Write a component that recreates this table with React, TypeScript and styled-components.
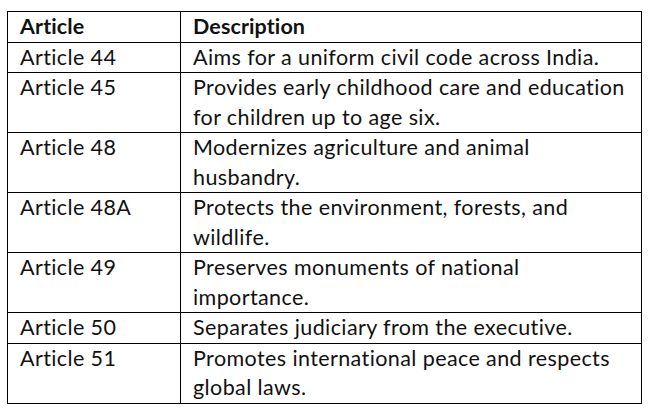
import styled, { createGlobalStyle } from 'styled-components'

const GlobalStyle = createGlobalStyle`
  html, body {
    margin: 0;
    padding: 0;
    background: #ffffff;
  }
  body {
    font-family: Lato, 'Liberation Sans', sans-serif;
    color: #111111;
  }
`

//#region styles
const Page = styled.div`
  width: 650px;
  height: 415px;
  padding: 11px 0 0 7px;
  box-sizing: border-box;
`
const Table = styled.table`
  width: 634px;
  border-collapse: collapse;
  table-layout: fixed;
  font-size: 21.5px;
  line-height: 29.5px;
`
const Col = styled.col<{ $width: number }>`
  width: ${p => p.$width}px;
`
const HeadCell = styled.th`
  border: 1px solid #000;
  padding: 0 0 0 12px;
  text-align: left;
  font-weight: 700;
  vertical-align: top;
  letter-spacing: 0.1px;
`
const Cell = styled.td`
  border: 1px solid #000;
  padding: 0 0 0 12px;
  vertical-align: top;
  white-space: nowrap;
  letter-spacing: 0.4px;
`
//#endregion

interface RowType {
  article: string;
  lines: string[];
}

const rows: RowType[] = [
  { article: 'Article 44', lines: ['Aims for a uniform civil code across India.'] },
  { article: 'Article 45', lines: ['Provides early childhood care and education', 'for children up to age six.'] },
  { article: 'Article 48', lines: ['Modernizes agriculture and animal', 'husbandry.'] },
  { article: 'Article 48A', lines: ['Protects the environment, forests, and', 'wildlife.'] },
  { article: 'Article 49', lines: ['Preserves monuments of national', 'importance.'] },
  { article: 'Article 50', lines: ['Separates judiciary from the executive.'] },
  { article: 'Article 51', lines: ['Promotes international peace and respects', 'global laws.'] },
]

export default function App() {
  return (
    <Page>
      <GlobalStyle />
      <Table>
        <colgroup>
          <Col $width={173} />
          <Col $width={461} />
        </colgroup>
        <thead>
          <tr>
            <HeadCell>Article</HeadCell>
            <HeadCell>Description</HeadCell>
          </tr>
        </thead>
        <tbody>
          {
            rows.map(item => (
              <tr key={item.article}>
                <Cell>{item.article}</Cell>
                <Cell>
                  {item.lines.map((line, i) => (
                    <span key={i}>{i > 0 && <br />}{line}</span>
                  ))}
                </Cell>
              </tr>
            ))
          }
        </tbody>
      </Table>
    </Page>
  )
}
